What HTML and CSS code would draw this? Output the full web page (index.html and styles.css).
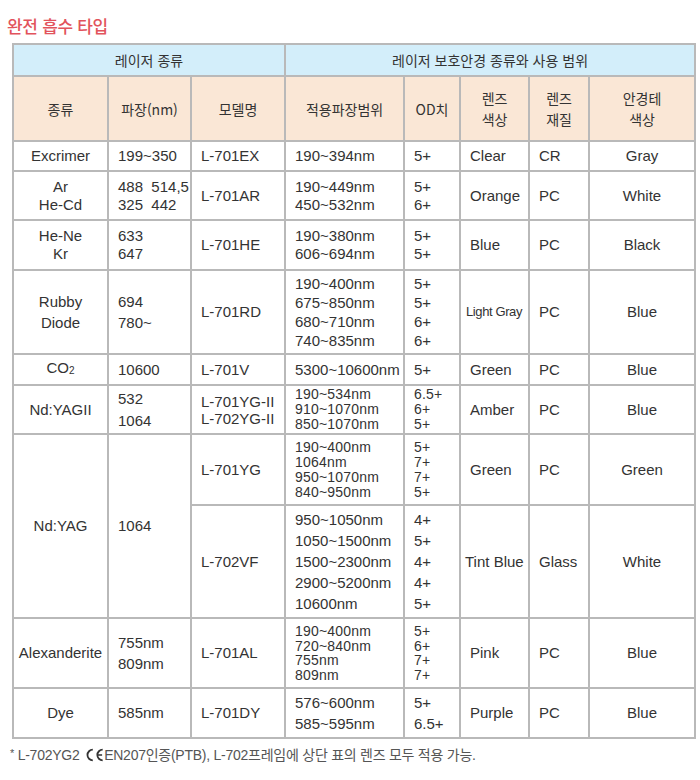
FILE: index.html
```html
<!DOCTYPE html>
<html lang="ko">
<head>
<meta charset="utf-8">
<title>완전 흡수 타입</title>
<link rel="stylesheet" href="styles.css">
</head>
<body>
<h1 class="title">완전 흡수 타입</h1>
<table class="spec">
  <colgroup>
    <col class="c1"><col class="c2"><col class="c3"><col class="c4"><col class="c5"><col class="c6"><col class="c7"><col class="c8">
  </colgroup>
  <thead>
    <tr class="h1row">
      <th colspan="3">레이저 종류</th>
      <th colspan="5">레이저 보호안경 종류와 사용 범위</th>
    </tr>
    <tr class="h2row">
      <th>종류</th>
      <th>파장(nm)</th>
      <th>모델명</th>
      <th>적용파장범위</th>
      <th>OD치</th>
      <th class="two">렌즈<br>색상</th>
      <th class="two">렌즈<br>재질</th>
      <th class="two">안경테<br>색상</th>
    </tr>
  </thead>
  <tbody>
    <tr class="r-ex">
      <td class="ctr">Excrimer</td>
      <td>199~350</td>
      <td>L-701EX</td>
      <td>190~394nm</td>
      <td>5+</td>
      <td>Clear</td>
      <td>CR</td>
      <td class="ctr">Gray</td>
    </tr>
    <tr class="r-ar">
      <td class="ctr lh18">Ar<br>He-Cd</td>
      <td class="lh18">488&nbsp; 514,5<br>325&nbsp; 442</td>
      <td>L-701AR</td>
      <td class="lh18">190~449nm<br>450~532nm</td>
      <td class="lh18">5+<br>6+</td>
      <td>Orange</td>
      <td>PC</td>
      <td class="ctr">White</td>
    </tr>
    <tr class="r-he">
      <td class="ctr lh18">He-Ne<br>Kr</td>
      <td class="lh18">633<br>647</td>
      <td>L-701HE</td>
      <td class="lh18">190~380nm<br>606~694nm</td>
      <td class="lh18">5+<br>5+</td>
      <td>Blue</td>
      <td>PC</td>
      <td class="ctr">Black</td>
    </tr>
    <tr class="r-rd">
      <td class="ctr lh21">Rubby<br>Diode</td>
      <td class="lh21">694<br>780~</td>
      <td>L-701RD</td>
      <td class="lh19">190~400nm<br>675~850nm<br>680~710nm<br>740~835nm</td>
      <td class="lh19">5+<br>5+<br>6+<br>6+</td>
      <td class="narrow">Light Gray</td>
      <td>PC</td>
      <td class="ctr">Blue</td>
    </tr>
    <tr class="r-co">
      <td class="ctr">CO<span class="sub">2</span></td>
      <td>10600</td>
      <td>L-701V</td>
      <td>5300~10600nm</td>
      <td>5+</td>
      <td>Green</td>
      <td>PC</td>
      <td class="ctr">Blue</td>
    </tr>
    <tr class="r-yg2">
      <td class="ctr">Nd:YAGII</td>
      <td class="lh22">532<br>1064</td>
      <td class="lh17">L-701YG-II<br>L-702YG-II</td>
      <td class="lh15 tight">190~534nm<br>910~1070nm<br>850~1070nm</td>
      <td class="lh15 tight">6.5+<br>6+<br>5+</td>
      <td>Amber</td>
      <td>PC</td>
      <td class="ctr">Blue</td>
    </tr>
    <tr class="r-yg">
      <td class="ctr" rowspan="2">Nd:YAG</td>
      <td rowspan="2">1064</td>
      <td>L-701YG</td>
      <td class="lh15 tight">190~400nm<br>1064nm<br>950~1070nm<br>840~950nm</td>
      <td class="lh15 tight">5+<br>7+<br>7+<br>5+</td>
      <td>Green</td>
      <td>PC</td>
      <td class="ctr">Green</td>
    </tr>
    <tr class="r-vf">
      <td>L-702VF</td>
      <td class="lh21">950~1050nm<br>1050~1500nm<br>1500~2300nm<br>2900~5200nm<br>10600nm</td>
      <td class="lh21">4+<br>5+<br>4+<br>4+<br>5+</td>
      <td class="tint">Tint Blue</td>
      <td>Glass</td>
      <td class="ctr">White</td>
    </tr>
    <tr class="r-al">
      <td class="ctr">Alexanderite</td>
      <td class="lh21">755nm<br>809nm</td>
      <td>L-701AL</td>
      <td class="lh145 tight">190~400nm<br>720~840nm<br>755nm<br>809nm</td>
      <td class="lh145 tight">5+<br>6+<br>7+<br>7+</td>
      <td>Pink</td>
      <td>PC</td>
      <td class="ctr">Blue</td>
    </tr>
    <tr class="r-dy">
      <td class="ctr">Dye</td>
      <td>585nm</td>
      <td>L-701DY</td>
      <td class="lh21">576~600nm<br>585~595nm</td>
      <td class="lh21">5+<br>6.5+</td>
      <td>Purple</td>
      <td>PC</td>
      <td class="ctr">Blue</td>
    </tr>
  </tbody>
</table>
<p class="note"><span class="star">*</span> L-702YG2 <svg class="ce" viewBox="0 0 20 14" width="19" height="14" aria-label="CE"><path d="M8.2 1.4 A5.6 5.6 0 1 0 8.2 12.6" fill="none" stroke="#333" stroke-width="1.9"/><path d="M18.6 1.4 A5.6 5.6 0 1 0 18.6 12.6" fill="none" stroke="#333" stroke-width="1.9"/><path d="M13.3 7 H18" fill="none" stroke="#333" stroke-width="1.6"/></svg>EN207인증(PTB), L-702프레임에 상단 표의 렌즈 모두 적용 가능.</p>
</body>
</html>
```

FILE: styles.css
```css
html, body {
  margin: 0;
  padding: 0;
  background: #ffffff;
}

body {
  font-family: "Liberation Sans", "Noto Sans CJK KR", sans-serif;
  color: #333333;
}

.title {
  margin: 16px 0 0 7px;
  font-family: "Noto Sans CJK KR", "Liberation Sans", sans-serif;
  font-size: 17px;
  line-height: 20px;
  font-weight: 500;
  color: #e2535c;
  letter-spacing: -0.3px;
}

.spec {
  margin: 7px 0 0 12px;
  width: 682px;
  table-layout: fixed;
  border-collapse: collapse;
  font-size: 15px;
}

.c1 { width: 95px; }
.c2 { width: 83px; }
.c3 { width: 94px; }
.c4 { width: 119px; }
.c5 { width: 56px; }
.c6 { width: 69px; }
.c7 { width: 60px; }
.c8 { width: 106px; }

.spec th,
.spec td {
  border: 2px solid #b9b9b9;
  padding: 0 0 0 9px;
  vertical-align: middle;
  text-align: left;
  line-height: 18px;
  white-space: nowrap;
  overflow: hidden;
}

.spec th {
  font-family: "Noto Sans CJK KR", "Liberation Sans", sans-serif;
  font-weight: 400;
  font-size: 14px;
  text-align: center;
  padding: 0;
  color: #333333;
}

.h1row { height: 32px; }
.h1row th { background: #d3eefa; }

.h2row { height: 65px; }
.h2row th { background: #fae7d6; }
.h2row th.two { line-height: 21px; }

.spec td.ctr {
  text-align: center;
  padding: 0;
}

.r-ex { height: 30px; }
.r-ar { height: 49px; }
.r-he { height: 50px; }
.r-rd { height: 84px; }
.r-co { height: 31px; }
.r-yg2 { height: 49px; }
.r-yg { height: 71px; }
.r-vf { height: 113px; }
.r-al { height: 70px; }
.r-dy { height: 50px; }

.spec td.lh145 { line-height: 14.5px; }
.spec td.lh15 { line-height: 15px; }
.spec td.lh17 { line-height: 17px; }
.spec td.lh18 { line-height: 18px; }
.spec td.lh19 { line-height: 19px; }
.spec td.lh21 { line-height: 21px; }
.spec td.lh22 { line-height: 22px; }

.spec td.tight {
  font-size: 14px;
  letter-spacing: 0.2px;
}

.spec td.narrow {
  font-size: 13px;
  letter-spacing: -0.4px;
  padding-left: 5px;
}

.spec td.tint {
  padding-left: 4px;
}

.sub {
  font-size: 10px;
  vertical-align: -1px;
}

.note {
  margin: 6px 0 0 10px;
  font-family: "Liberation Sans", "Noto Sans CJK KR", sans-serif;
  font-size: 14px;
  line-height: 16px;
  color: #555555;
  letter-spacing: -0.25px;
  white-space: nowrap;
}

.star {
  font-size: 11px;
  vertical-align: 3px;
}

.ce {
  vertical-align: -2px;
  margin: 0 0 0 2px;
}
```
